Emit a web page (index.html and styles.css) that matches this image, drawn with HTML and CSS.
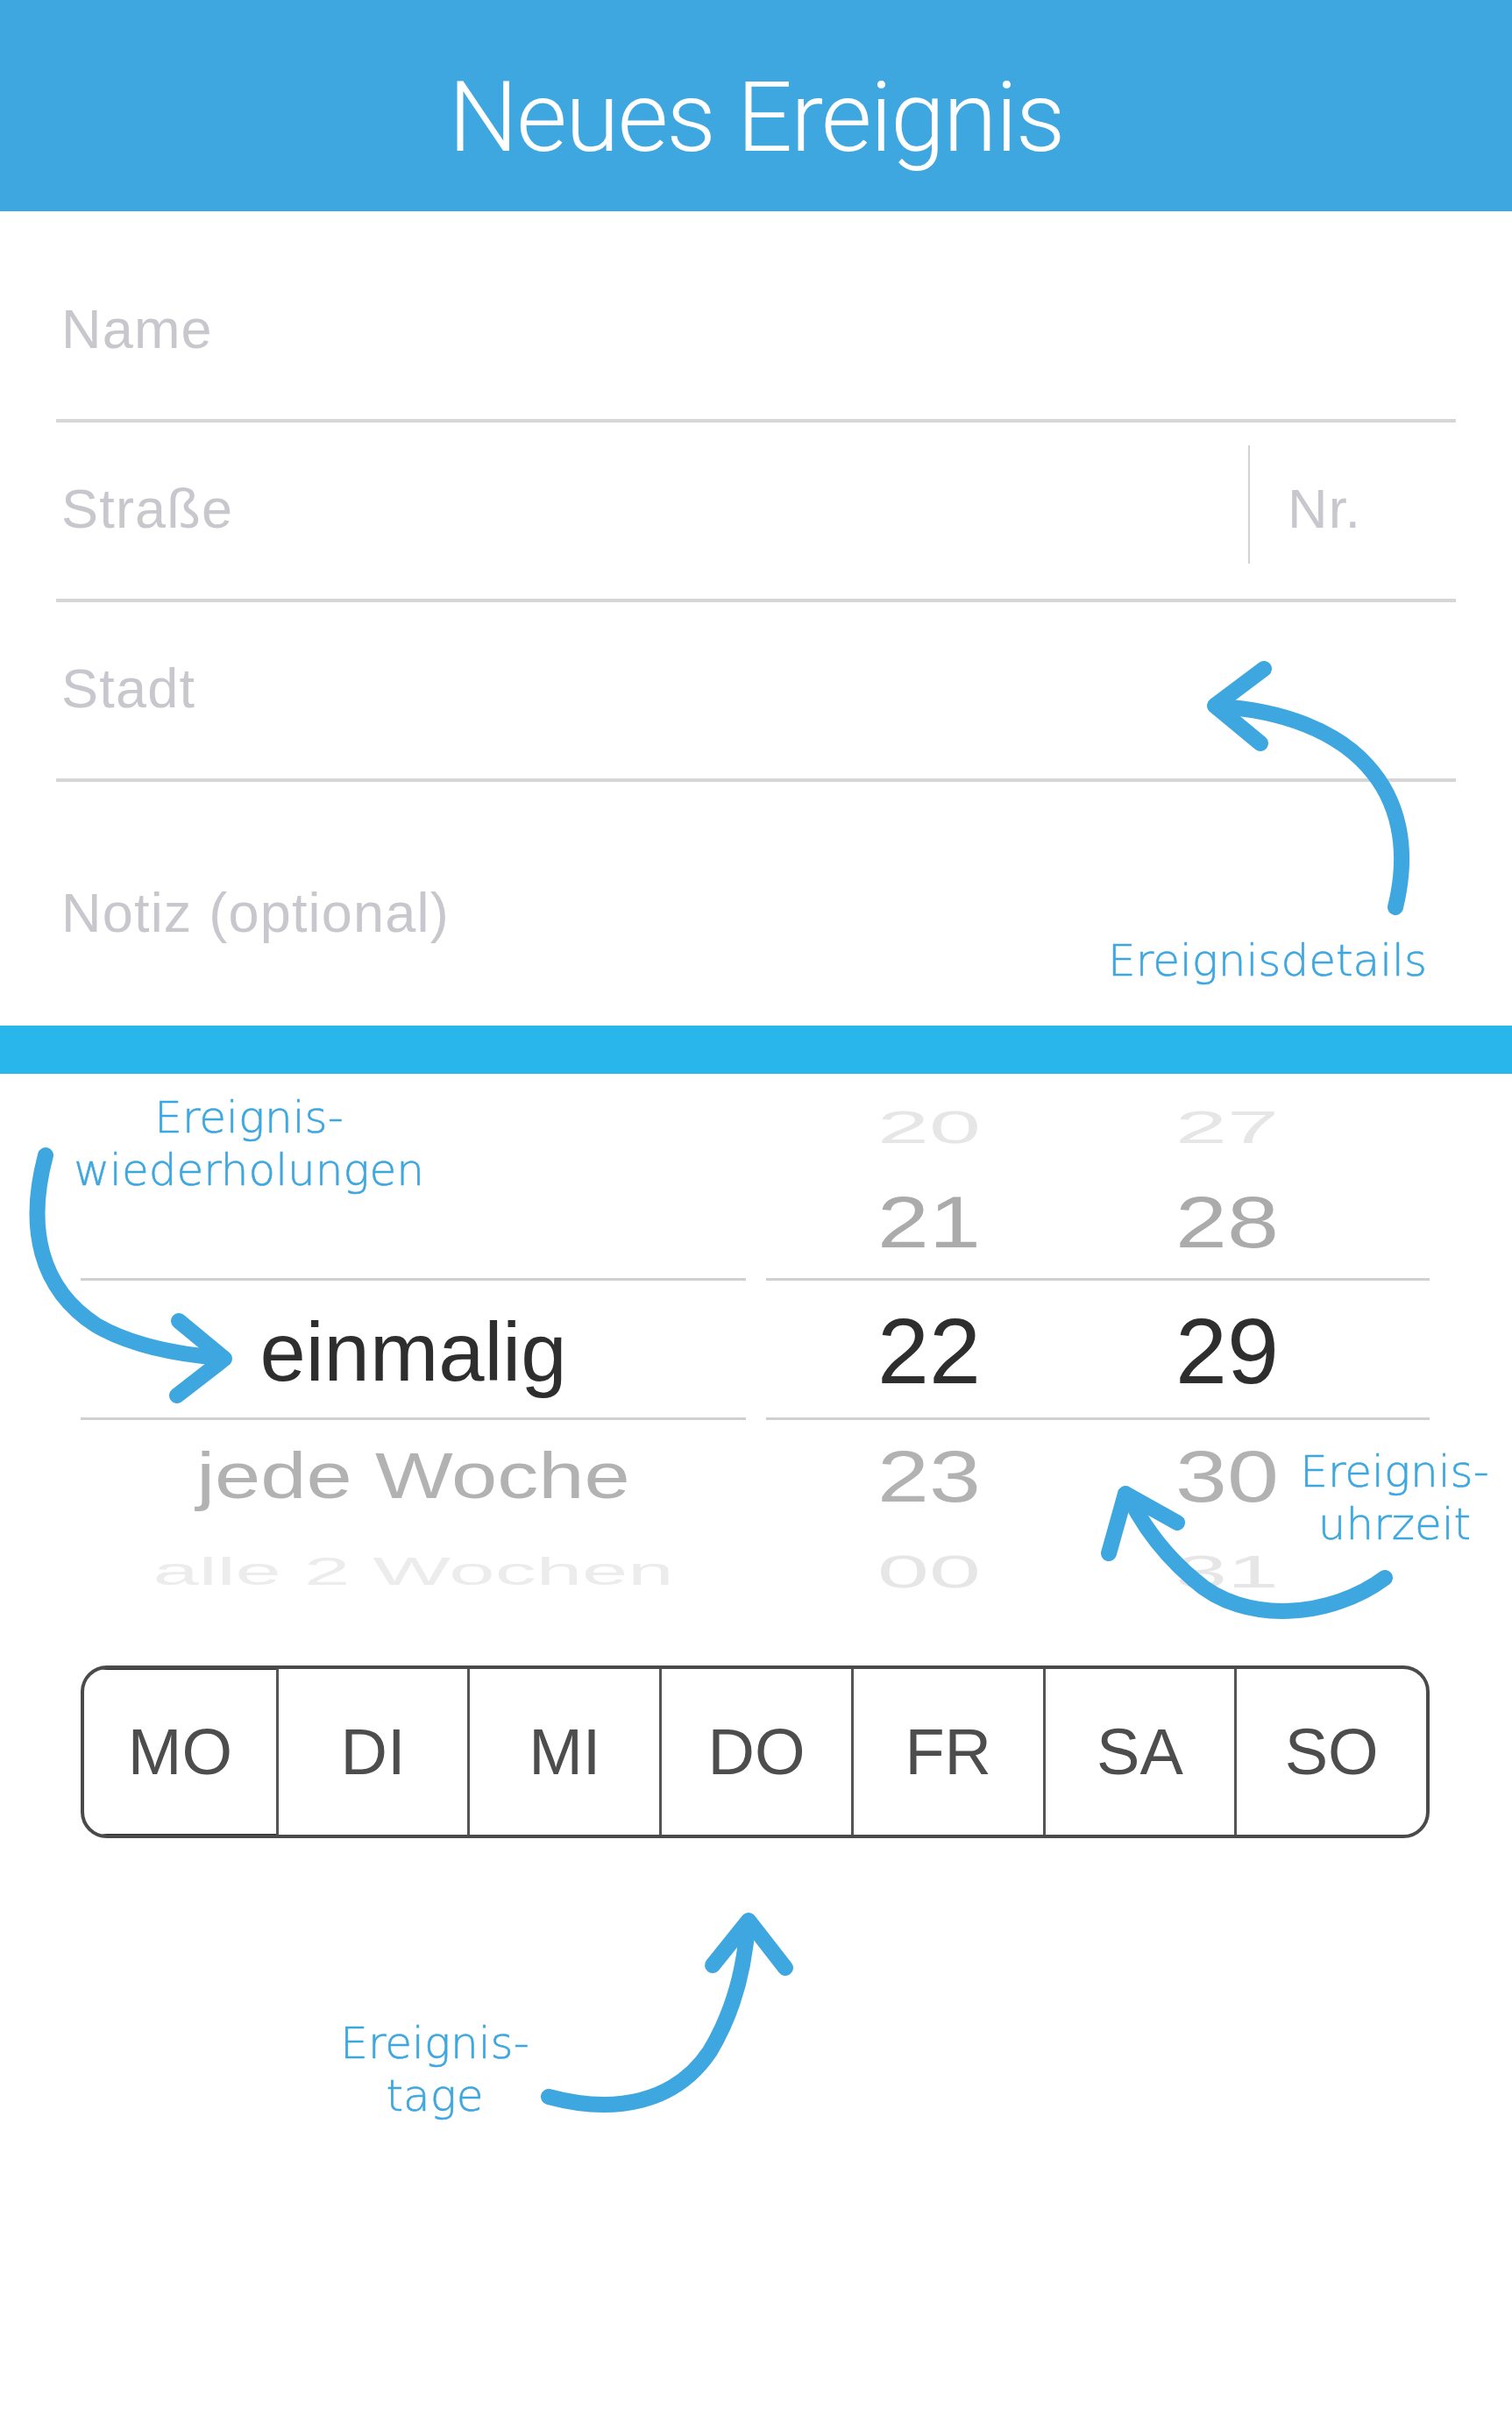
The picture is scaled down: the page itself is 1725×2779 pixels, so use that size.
FILE: index.html
```html
<!DOCTYPE html>
<html lang="de">
<head>
<meta charset="utf-8">
<title>Neues Ereignis</title>
<link rel="stylesheet" href="styles.css">
</head>
<body>
<div class="page">
  <header class="topbar"><h1 class="title">Neues Ereignis</h1></header>

  <section class="form">
    <div class="field"><span class="ph">Name</span></div>
    <div class="field"><span class="ph grow">Straße</span><span class="vdiv"></span><span class="ph nr">Nr.</span></div>
    <div class="field"><span class="ph">Stadt</span></div>
    <div class="note"><span class="ph">Notiz (optional)</span></div>
  </section>

  <div class="bar"></div>

  <section class="picker">
    <div class="wheel left">
      <div class="row far-top"></div>
      <div class="row near"></div>
      <div class="row sel"><span class="txt">einmalig</span></div>
      <div class="row near"><span class="txt t-near">jede Woche</span></div>
      <div class="row far-bot"><span class="txt t-far">alle 2 Wochen</span></div>
    </div>
    <div class="wheel right">
      <div class="row far-top"><span class="num t-far">20</span><span class="num t-far">27</span><span></span></div>
      <div class="row near"><span class="num t-near1">21</span><span class="num t-near1">28</span><span></span></div>
      <div class="row sel"><span class="num">22</span><span class="num">29</span><span></span></div>
      <div class="row near"><span class="num t-near">23</span><span class="num t-near">30</span><span></span></div>
      <div class="row far-bot"><span class="num t-far">00</span><span class="num t-far">31</span><span></span></div>
    </div>
  </section>

  <section class="days">
    <div class="seg">
      <div class="day first">MO</div>
      <div class="day">DI</div>
      <div class="day">MI</div>
      <div class="day">DO</div>
      <div class="day">FR</div>
      <div class="day">SA</div>
      <div class="day">SO</div>
    </div>
  </section>

  <svg class="arrows" viewBox="0 0 1725 2779" width="1725" height="2779" aria-hidden="true">
    <g fill="none" stroke="#3EA7DF" stroke-width="18" stroke-linecap="round" stroke-linejoin="round">
      <path d="M1592,1035 C1625,900 1540,815 1390,806"/>
      <path d="M1442,763 L1386,805 L1438,848"/>
      <path d="M52,1318 C30,1400 45,1470 110,1512 C150,1535 200,1545 252,1549"/>
      <path d="M204,1507 L256,1550 L202,1592"/>
      <path d="M1580,1800 C1520,1845 1420,1855 1362,1802 C1330,1775 1305,1742 1288,1708"/>
      <path d="M1265,1772 L1284,1704 L1343,1737"/>
      <path d="M626,2392 C700,2412 770,2400 810,2340 C840,2290 850,2240 853,2194"/>
      <path d="M813,2242 L854,2191 L896,2245"/>
    </g>
  </svg>

  <div class="callout c-details">Ereignisdetails</div>
  <div class="callout c-repeat">Ereignis-<br>wiederholungen</div>
  <div class="callout c-time">Ereignis-<br>uhrzeit</div>
  <div class="callout c-days">Ereignis-<br>tage</div>
</div>
</body>
</html>
```

FILE: styles.css
```css
* { box-sizing: border-box; }
html, body { margin: 0; padding: 0; background: #fff; }
.page {
  position: relative;
  width: 1725px;
  min-height: 2779px;
  overflow: hidden;
  background: #fff;
  font-family: "Liberation Sans", Arial, sans-serif;
}

/* header */
.topbar {
  height: 241px;
  background: #3EA7DF;
  padding-top: 78px;
}
.title {
  margin: 0;
  text-align: center;
  color: #fff;
  font-family: Roboto, "Liberation Sans", sans-serif;
  font-weight: 300;
  font-size: 112px;
  line-height: 1;
  letter-spacing: -2px;
}

/* form */
.form { padding: 36px 64px 0; }
.field {
  height: 205px;
  border-bottom: 4px solid #D6D6D6;
  display: flex;
  align-items: center;
  padding-bottom: 4px;
}
.ph {
  font-family: "Liberation Sans", Arial, sans-serif;
  font-size: 63px;
  line-height: 1;
  letter-spacing: 1.2px;
  color: #C7C7CD;
  margin-left: 6px;
}
.grow { flex: 1; }
.vdiv {
  width: 2px;
  height: 135px;
  background: #D3D3D3;
  margin-bottom: 10px;
}
.nr { width: 235px; padding-left: 43px; margin-left: 0; }
.note {
  height: 278px;
  padding-top: 118px;
}

.bar { height: 55px; background: #29B6EA; }

/* picker */
.picker {
  display: flex;
  gap: 23px;
  padding: 17px 94px 0 92px;
}
.wheel { display: flex; flex-direction: column; }
.wheel.left { width: 759px; }
.wheel.right { flex: 1; }
.row { display: flex; align-items: center; justify-content: center; }
.wheel.right .row {
  display: grid;
  grid-template-columns: 372px 308px 1fr;
  align-items: center;
  align-content: center;
  justify-items: center;
}
.far-top { height: 88px; }
.near { height: 128px; }
.sel {
  height: 162px;
  border-top: 3px solid #D0D0D0;
  border-bottom: 3px solid #D0D0D0;
}
.far-bot { height: 90px; }
.txt {
  display: inline-block;
  font-size: 94px;
  line-height: 1;
  color: #2E2E2E;
  padding-top: 8px;
}
.num {
  display: inline-block;
  font-size: 106px;
  line-height: 1;
  color: #2E2E2E;
  padding-top: 4px;
}
.t-near { color: #B2B2B2; transform: scaleY(0.78); padding-top: 0; }
.t-near1 { color: #ABABAB; transform: scaleY(0.79); padding-top: 0; }
.t-far { color: #E6E6E6; transform: scaleY(0.48); padding-top: 0; }
.far-bot .txt.t-far { color: #ECECEC; }

/* days */
.days { padding: 62px 94px 0 92px; }
.seg {
  display: grid;
  grid-template-columns: repeat(7, 1fr);
  height: 197px;
  border: 4px solid #4A4A4A;
  border-radius: 30px;
  overflow: hidden;
}
.day {
  display: flex;
  align-items: center;
  justify-content: center;
  border-left: 3px solid #555555;
  font-size: 74px;
  color: #4D4D4D;
  line-height: 1;
}
.day.first {
  border-left: none;
  box-shadow: inset 0 1px 0 #2E2E2E, inset 0 -1px 0 #2E2E2E;
}

/* annotation overlay */
.arrows {
  position: absolute;
  left: 0;
  top: 0;
  pointer-events: none;
}
.callout {
  position: absolute;
  font-family: "DejaVu Sans", sans-serif;
  font-weight: 200;
  font-size: 50px;
  line-height: 60px;
  color: #3EA7DF;
  -webkit-text-stroke: 0.6px #3EA7DF;
  text-align: center;
  white-space: nowrap;
}
.c-details { right: 97px; top: 1066px; text-align: right; }
.c-repeat { left: 34px; width: 500px; top: 1245px; }
.c-time { left: 1441px; width: 300px; top: 1649px; }
.c-days { left: 346px; width: 300px; top: 2301px; }
```
